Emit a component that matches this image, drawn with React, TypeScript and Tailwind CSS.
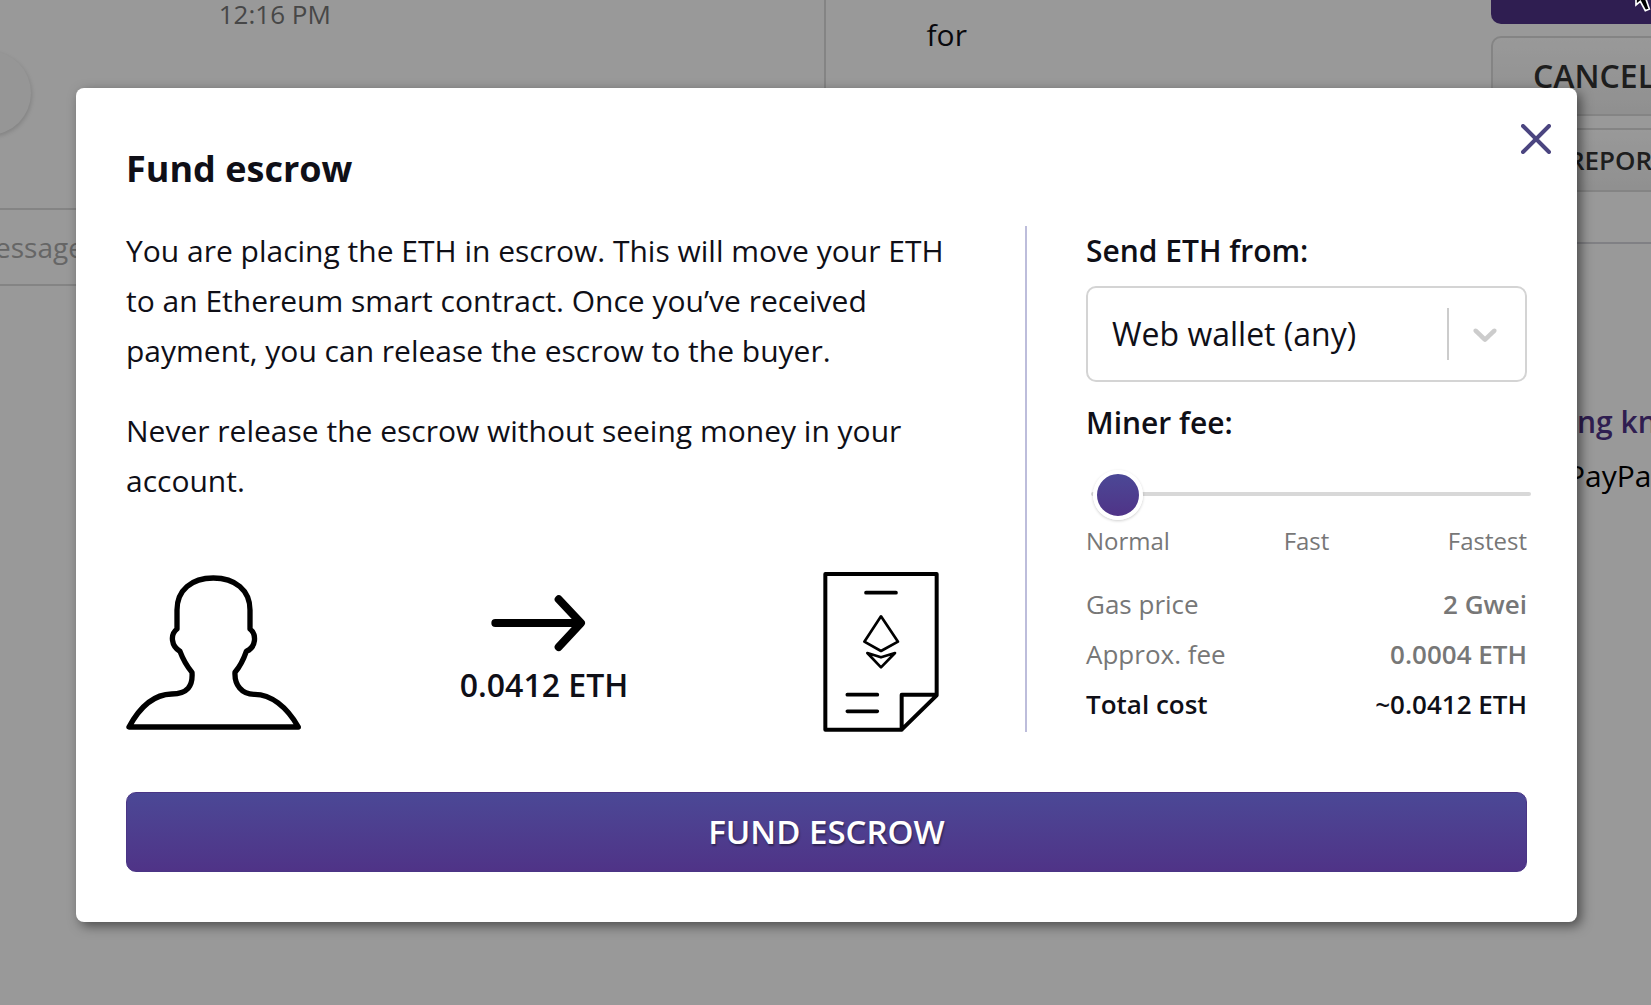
import React from "react";

const chevron =
  "M4.516 7.548c0.436-0.446 1.043-0.481 1.576 0l3.908 3.747 3.908-3.747c0.533-0.481 1.141-0.446 1.574 0 0.436 0.445 0.408 1.197 0 1.615-0.406 0.418-4.695 4.502-4.695 4.502-0.217 0.223-0.502 0.335-0.787 0.335s-0.57-0.112-0.789-0.335c0 0-4.287-4.084-4.695-4.502s-0.436-1.17 0-1.615z";

function PersonIcon() {
  return (
    <svg width="175" height="155" viewBox="48 45 525 465" fill="none" stroke="#000" strokeWidth="16" strokeLinejoin="round" aria-hidden="true">
      <path d="M57 501H565C530 440 482 402 432 403C395 403 373 375 375 337C391 318 400 300 409 274C439 262 440 223 420 207V150C420 90 375 54 310 54C245 54 201 90 201 150V207C180 223 183 258 210 274C219 298 232 320 246 337C249 378 233 401 185 402C130 403 90 440 57 501Z" />
    </svg>
  );
}

function ArrowIcon() {
  return (
    <svg width="105" height="57" viewBox="153 74 315 171" fill="none" stroke="#000" strokeWidth="24" strokeLinecap="round" strokeLinejoin="round" aria-hidden="true">
      <path d="M166 158H422M356 87L423 158L356 230" />
    </svg>
  );
}

function ContractIcon() {
  return (
    <svg width="116" height="160" viewBox="69 52 348 480" fill="none" stroke="#000" strokeLinecap="round" strokeLinejoin="round" aria-hidden="true">
      <path strokeWidth="12" d="M76 58H410V422L305 525H76ZM410 420H305V525" />
      <path strokeWidth="11" d="M198 114H288M142 420H232M142 470H232" />
      <path strokeWidth="8" d="M243 185L294 261L243 289L193 261ZM202 295L243 308L285 295L243 338Z" />
    </svg>
  );
}

function TradePage() {
  return (
    <div className="flex h-[600px] overflow-hidden whitespace-nowrap bg-white text-[30px] leading-[50px]">
      <section className="w-1/2 shrink-0 border-r-2 border-[#dcdcdc]">
        <div className="flex h-[51px] justify-center pr-[274px]">
          <time className="-mt-2 text-[26px] leading-[44px] text-[#777]">12:16 PM</time>
        </div>
        <div className="-ml-[53px] size-[84px] rounded-full bg-[#fafafa] shadow-[1px_2px_4px_rgba(0,0,0,0.15)]" />
        <input
          aria-label="Message"
          placeholder="essage"
          className="mt-[73px] -ml-[5px] block h-[78px] w-full border-y-2 border-[#dcdcdc] bg-white text-[28px] placeholder:text-[#aaa]"
        />
      </section>
      <section className="min-w-0 flex-1 pt-[10px] pl-[101px]">for</section>
      <aside className="w-[160px] shrink-0 font-semibold text-[#333]">
        <div className="h-6 w-[400px] rounded-b-[10px] bg-[#4f3387]" />
        <button className="mt-3 flex h-[80px] w-[400px] items-center rounded-[10px] border-2 border-[#dcdcdc] bg-linear-to-b from-white to-[#f0f0f0] pl-10 text-[32px]">
          CANCEL
        </button>
        <button className="mt-3 flex h-[64px] w-[400px] items-center rounded-[10px] border-2 border-[#dcdcdc] bg-linear-to-b from-white to-[#f0f0f0] pl-[75px] text-[26px]">
          REPORT
        </button>
        <div className="mt-[50px] w-[400px] border-t-2 border-[#d5d5dd] pt-[153px] pl-[86px]">
          <a href="#seller" className="block text-[#4f3387]">ng kn</a>
          <p className="mt-1 -ml-[10px] font-normal text-black">PayPal</p>
        </div>
      </aside>
    </div>
  );
}

const costs = [
  { label: "Gas price", value: "2 Gwei", total: false },
  { label: "Approx. fee", value: "0.0004 ETH", total: false },
  { label: "Total cost", value: "~0.0412 ETH", total: true },
];

function FundEscrow() {
  return (
    <div role="dialog" aria-labelledby="title" className="relative w-full rounded-[8px] bg-white p-[50px] shadow-[4px_4px_12px_rgba(0,0,0,0.5)]">
      <button aria-label="Close" className="absolute top-9 right-[26px]">
        <svg width="30" height="30" viewBox="0 0 30 30" stroke="#4b4580" strokeWidth="4" strokeLinecap="round" aria-hidden="true">
          <path d="M2 2L28 28M28 2L2 28" />
        </svg>
      </button>
      <h1 id="title" className="text-[36px] leading-[62px] font-bold">Fund escrow</h1>
      <div className="mt-[26px] flex">
        <div className="flex flex-1 flex-col justify-between pr-[63px]">
          <div className="flex flex-col gap-[30px]">
            <p>
              You are placing the ETH in escrow. This will move your ETH to an Ethereum smart contract. Once you’ve
              received payment, you can release the escrow to the buyer.
            </p>
            <p>Never release the escrow without seeing money in your account.</p>
          </div>
          <div className="grid grid-cols-3 items-center">
            <PersonIcon />
            <div className="flex flex-col items-center gap-2">
              <ArrowIcon />
              <span className="text-[32px] font-semibold">0.0412 ETH</span>
            </div>
            <div className="flex justify-end pr-[23px]">
              <ContractIcon />
            </div>
          </div>
        </div>
        <div className="w-[502px] border-l-2 border-[#bdbddb] pb-[3px] pl-[59px]">
          <label htmlFor="wallet" className="block font-semibold">Send ETH from:</label>
          <div className="relative mt-[10px]">
            <select id="wallet" className="h-24 w-full appearance-none rounded-[10px] border-2 border-[#d4d4d4] bg-white pl-6 text-[32px]">
              <option>Web wallet (any)</option>
            </select>
            <div className="pointer-events-none absolute inset-y-0 right-[22px] flex items-center gap-4">
              <span className="h-[52px] w-0.5 bg-[#ccc]" />
              <svg width="40" height="40" viewBox="0 0 20 20" fill="#ccc" aria-hidden="true">
                <path d={chevron} />
              </svg>
            </div>
          </div>
          <label htmlFor="fee" className="mt-4 block font-semibold">Miner fee:</label>
          <div className="mt-[21px] -mr-1 pl-[5px]">
            <input
              id="fee"
              type="range"
              min={0}
              max={200}
              defaultValue={1}
              className="block h-[50px] w-full appearance-none bg-transparent [&::-webkit-slider-runnable-track]:h-1 [&::-webkit-slider-runnable-track]:rounded-full [&::-webkit-slider-runnable-track]:bg-[#d8d8d8] [&::-webkit-slider-thumb]:-mt-[22px] [&::-webkit-slider-thumb]:size-[50px] [&::-webkit-slider-thumb]:appearance-none [&::-webkit-slider-thumb]:rounded-full [&::-webkit-slider-thumb]:border-4 [&::-webkit-slider-thumb]:border-white [&::-webkit-slider-thumb]:bg-linear-to-b [&::-webkit-slider-thumb]:from-[#4b4896] [&::-webkit-slider-thumb]:to-[#4f3387] [&::-webkit-slider-thumb]:shadow-[0_1px_3px_rgba(0,0,0,0.2)]"
            />
          </div>
          <div className="grid grid-cols-3 text-[24px] leading-[44px] text-[#777]">
            <span>Normal</span>
            <span className="text-center">Fast</span>
            <span className="text-right">Fastest</span>
          </div>
          <dl className="mt-4 text-[26px]">
            {costs.map((c) => (
              <div key={c.label} className={c.total ? "flex justify-between font-semibold" : "flex justify-between text-[#777]"}>
                <dt>{c.label}</dt>
                <dd className="font-semibold">{c.value}</dd>
              </div>
            ))}
          </dl>
        </div>
      </div>
      <button className="mt-[60px] h-20 w-full rounded-[10px] border border-[#4a3585] bg-linear-to-b from-[#4b4896] to-[#4f3387] text-[33px] font-semibold text-white [text-shadow:1px_2px_2px_rgba(0,0,0,0.4)]">
        FUND ESCROW
      </button>
    </div>
  );
}

export default function App() {
  return (
    <main className="relative h-screen overflow-hidden bg-white font-['Open_Sans',sans-serif] text-[30px] leading-[50px] text-[#0f0f17]">
      <TradePage />
      <div className="absolute inset-0 flex items-start bg-black/40 pt-[88px] pr-[74px] pl-[76px]">
        <FundEscrow />
      </div>
      <svg className="absolute top-0 right-0" width="18" height="13" viewBox="0 0 54 39" aria-hidden="true">
        <path d="M9 -8V15L22 4L37 32L49 27L37 -8Z" fill="#000" stroke="#fff" strokeWidth="5" />
      </svg>
    </main>
  );
}
